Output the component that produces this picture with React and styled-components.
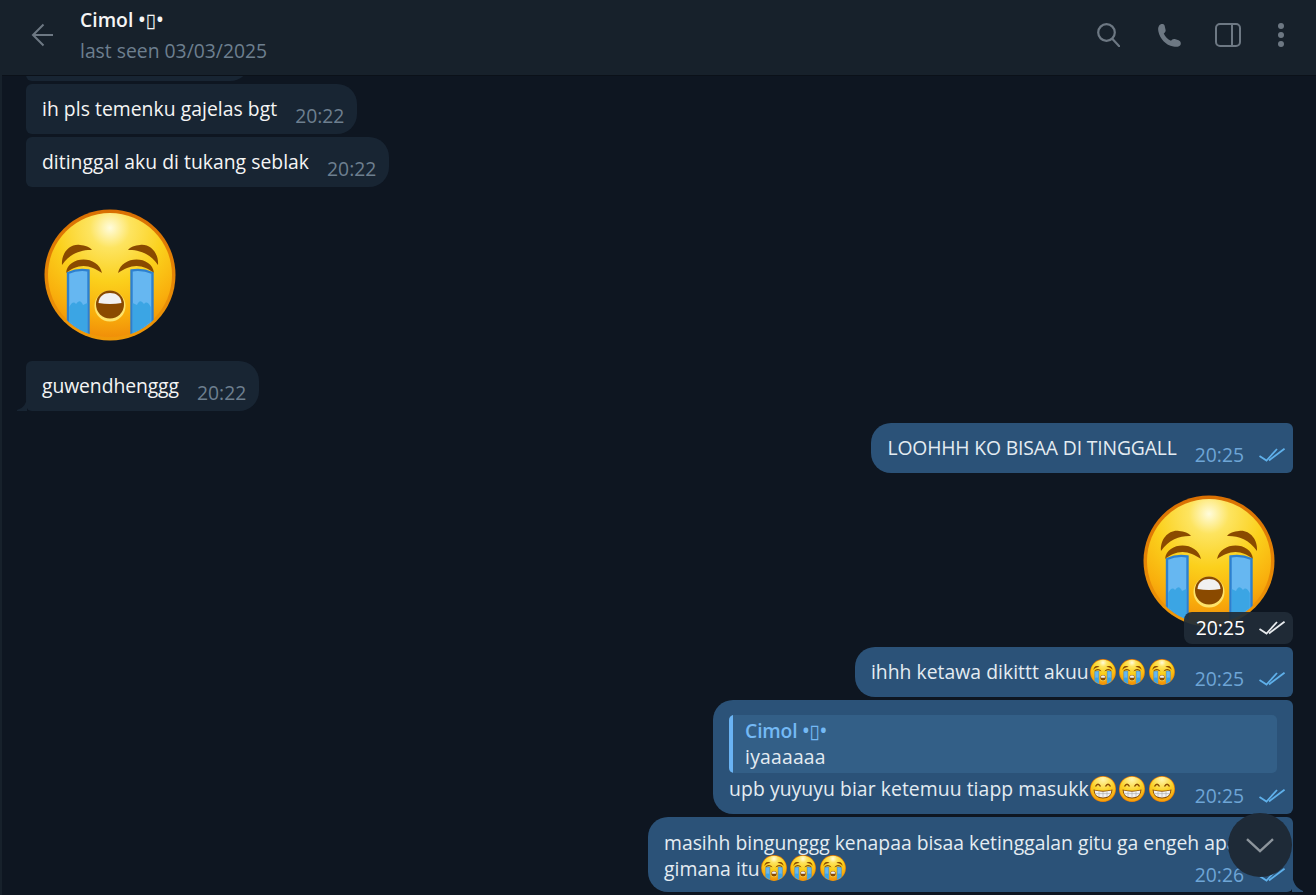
import React from "react";
import styled, { createGlobalStyle } from "styled-components";

const Global = createGlobalStyle`
  html, body { margin: 0; padding: 0; height: 100%; background: #0e1621; overflow: hidden; }
  #root { height: 100%; }
`;

const Page = styled.div`
  position: relative;
  width: 1316px;
  height: 895px;
  overflow: hidden;
  display: flex;
  flex-direction: column;
  background: #0e1621;
  border-left: 2px solid #17212b;
  box-sizing: border-box;
  font-family: "Open Sans", "DejaVu Sans", sans-serif;
  font-size: 19.33px;
  color: #f5f5f5;
  &::after {
    content: "";
    position: absolute;
    left: -2px;
    bottom: 0;
    width: 2px;
    height: 21px;
    background: #2b5278;
  }
`;

const Header = styled.header`
  position: relative;
  z-index: 2;
  flex: 0 0 76px;
  box-sizing: border-box;
  display: flex;
  align-items: center;
  background: #17212b;
  border-bottom: 1px solid #0b1119;
  padding: 0 32px 5px 29px;
`;

const HeaderTitle = styled.div`
  margin-left: 27px;
  flex: 1;
  display: flex;
  flex-direction: column;
  gap: 5px;
`;

const Name = styled.div`
  font-weight: 600;
  line-height: 26px;
  color: #f5f5f5;
`;

const LastSeen = styled.div`
  line-height: 26px;
  color: #6d7f8f;
`;

const HeaderIcons = styled.div`
  display: flex;
  align-items: center;
`;

const Icon = styled.svg`
  display: block;
  flex: none;
  margin-left: ${(p) => p.$ml || 0}px;
`;

const Messages = styled.main`
  flex: 1;
  min-height: 0;
  display: flex;
  flex-direction: column;
  justify-content: flex-end;
  gap: 3px;
  padding: 0 23px 3px 24px;
`;

const Bubble = styled.div`
  position: relative;
  flex: none;
  align-self: ${(p) => (p.$out ? "flex-end" : "flex-start")};
  display: flex;
  flex-direction: ${(p) => (p.$col ? "column" : "row")};
  box-sizing: border-box;
  width: ${(p) => (p.$w ? p.$w + "px" : "auto")};
  padding: 12px ${(p) => (p.$out ? 8 : 13)}px ${(p) => p.$pb || 12}px 16px;
  background: ${(p) => (p.$out ? "#2b5278" : "#182533")};
  border-radius: ${(p) => (p.$out ? "20px 6px 6px 20px" : "6px 20px 20px 6px")};
  margin-top: ${(p) => p.$mt || 0}px;
  color: ${(p) => (p.$out ? "#e4ecf2" : "#f5f5f5")};
`;

const ClippedBubble = styled.div`
  flex: none;
  width: 224px;
  height: 50px;
  background: #182533;
  border-radius: 6px 20px 20px 6px;
`;

const Tail = styled.svg`
  position: absolute;
  bottom: 0;
  ${(p) => (p.$out ? "right: -10px;" : "left: -9px;")}
`;

const Text = styled.div`
  line-height: 26px;
  white-space: pre;
  display: flex;
  align-items: center;
  letter-spacing: ${(p) => p.$ls || 0}px;
`;

const Lines = styled.div`
  flex: 1;
  min-width: 0;
`;

const Line = styled.div`
  display: flex;
  align-items: center;
  height: 26px;
  white-space: pre;
  letter-spacing: ${(p) => p.$ls || 0}px;
`;

const Meta = styled.div`
  flex: none;
  align-self: flex-end;
  display: flex;
  align-items: center;
  gap: 15px;
  margin-left: ${(p) => (p.$auto ? "auto" : "18px")};
  margin-bottom: -6px;
  line-height: 24px;
  letter-spacing: 0;
  color: ${(p) => (p.$out ? "#6ea5d6" : "#6d7f8f")};
`;

const ColumnFoot = styled.div`
  display: flex;
  justify-content: space-between;
`;

const Reply = styled.div`
  position: relative;
  box-sizing: border-box;
  height: 58px;
  margin: 3px 8px 3px 0;
  padding: 3px 0 0 16px;
  background: #335f87;
  border-radius: 5px;
  overflow: hidden;
  &::before {
    content: "";
    position: absolute;
    left: 0;
    top: 0;
    bottom: 0;
    width: 4px;
    background: #6ab3f3;
  }
`;

const ReplyName = styled.div`
  font-weight: 600;
  line-height: 26px;
  letter-spacing: -0.2px;
  color: #74b9f5;
`;

const ReplyText = styled.div`
  line-height: 26px;
  letter-spacing: 0.2px;
  color: #e4ecf2;
`;

const StickerRow = styled.div`
  flex: none;
  position: relative;
  align-self: ${(p) => (p.$out ? "flex-end" : "flex-start")};
  margin: ${(p) => (p.$out ? "19px 18px 18px 0" : "19px 0 18px 18px")};
  height: 131px;
  display: flex;
`;

const TimeBadge = styled.div`
  position: absolute;
  right: -18px;
  bottom: -18px;
  display: flex;
  align-items: center;
  gap: 14px;
  height: 32px;
  padding: 0 8px 0 12px;
  border-radius: 8px;
  background: rgba(32, 44, 56, 0.93);
  color: #fff;
  line-height: 32px;
`;

const ScrollButton = styled.button`
  position: absolute;
  z-index: 3;
  right: 24px;
  bottom: 18px;
  width: 64px;
  height: 64px;
  padding: 0;
  border: 0;
  border-radius: 50%;
  background: #1e2a37;
  display: flex;
  align-items: center;
  justify-content: center;
`;

const InlineEmoji = styled.span`
  display: inline-flex;
  margin: 0 3.5px 0 ${(p) => (p.$first ? 1 : 0)}px;
  &:last-of-type {
    margin-right: 2px;
  }
`;

const Checks = ({ color }) => (
  <svg width="26" height="14" viewBox="0 0 26 14" fill="none" stroke={color} strokeWidth="1.8">
    <path d="M0.5 8 L7.5 12.5 L18 1" />
    <path d="M10 12.5 L25.5 0.7" />
  </svg>
);

let uid = 0;
const Cry = ({ size }) => {
  const id = "c" + uid++;
  return (
    <svg width={size} height={size} viewBox="0 0 132 132">
      <defs>
        <radialGradient id={id + "f"} cx="50%" cy="12%" r="90%">
          <stop offset="0" stopColor="#fffcdc" />
          <stop offset="0.18" stopColor="#fde460" />
          <stop offset="0.48" stopColor="#fbd01c" />
          <stop offset="0.78" stopColor="#f9ae0c" />
          <stop offset="1" stopColor="#f08c08" />
        </radialGradient>
        <linearGradient id={id + "r"} x1="0" y1="0" x2="0" y2="1">
          <stop offset="0" stopColor="#d96f02" />
          <stop offset="1" stopColor="#f09a08" />
        </linearGradient>
        <clipPath id={id + "c"}>
          <circle cx="66" cy="66" r="62.5" />
        </clipPath>
      </defs>
      <circle cx="66" cy="66" r="65.5" fill={`url(#${id}r)`} />
      <circle cx="66" cy="66" r="62" fill={`url(#${id}f)`} />
      <g fill="#8a4a00">
        <path d="M18 56 C17 44 26 34.5 36 36 C41 36.5 46 38 48 41 C38 40.5 26 44 18 56Z" />
        <path d="M114 56 C115 44 106 34.5 96 36 C91 36.5 86 38 84 41 C94 40.5 106 44 114 56Z" />
        <path d="M22 64 C23 55 31 50.5 39.5 50.5 C48 50.5 56 55 58 64 C52 60 46 57 39.5 57 C33 57 27 60 22 64Z" />
        <path d="M110 64 C109 55 101 50.5 92.5 50.5 C84 50.5 76 55 74 64 C80 60 86 57 92.5 57 C99 57 105 60 110 64Z" />
      </g>
      <g clipPath={`url(#${id}c)`}>
        <path d="M24 64 Q34 59.5 44.5 61.5 L44.5 128 L24 114Z" fill="#66b7f1" stroke="#2d80cf" strokeWidth="2.4" />
        <path d="M25.2 98 Q29 91 32 95 Q36 89 39 96 L43.3 94 V126 L25.2 113Z" fill="#3ba5e4" />
        <path d="M87.5 61.5 Q98 59.5 108.5 64 L108.5 114 L87.5 128Z" fill="#66b7f1" stroke="#2d80cf" strokeWidth="2.4" />
        <path d="M106.8 98 Q103 91 100 95 Q96 89 93 96 L88.7 94 V126 L106.8 113Z" fill="#3ba5e4" />
      </g>
      <circle cx="66" cy="97" r="15.5" fill="#fde36a" />
      <circle cx="66" cy="95.5" r="14" fill="#8a4a00" />
      <path d="M54.5 94 C55 87 60 84 66 84 C72 84 77 87 77.5 94 Q66 96 54.5 94Z" fill="#f1f1f1" />
    </svg>
  );
};

const Grin = ({ size }) => {
  const id = "g" + uid++;
  return (
    <svg width={size} height={size} viewBox="0 0 26 26">
      <defs>
        <radialGradient id={id} cx="50%" cy="10%" r="95%">
          <stop offset="0" stopColor="#fff6b0" />
          <stop offset="0.5" stopColor="#fbd227" />
          <stop offset="1" stopColor="#f49a08" />
        </radialGradient>
      </defs>
      <circle cx="13" cy="13" r="13" fill="#e87c04" />
      <circle cx="13" cy="13" r="12.3" fill={`url(#${id})`} />
      <path d="M5.5 10.5 Q8 6 10.5 10.5 M15.5 10.5 Q18 6 20.5 10.5" stroke="#8a4a00" strokeWidth="1.5" fill="none" />
      <path d="M3.5 13.5 Q13 16 22.5 13.5 Q22 22.5 13 22.5 Q4 22.5 3.5 13.5Z" fill="#8a4a00" />
      <path d="M4.6 14.6 Q13 16.8 21.4 14.6 Q21 21.6 13 21.6 Q5 21.6 4.6 14.6Z" fill="#f2f2f2" />
      <path d="M4.8 17.6 H21.2 M9 15.5 V21 M13 16 V21.6 M17 15.5 V21" stroke="#a9a9a9" strokeWidth="0.6" fill="none" />
    </svg>
  );
};

const Emojis = ({ kind }) => {
  const E = kind === "grin" ? Grin : Cry;
  return (
    <>
      <InlineEmoji $first><E size={26} /></InlineEmoji>
      <InlineEmoji><E size={26} /></InlineEmoji>
      <InlineEmoji><E size={26} /></InlineEmoji>
    </>
  );
};

const OutTail = () => (
  <Tail $out width="11" height="18" viewBox="0 0 11 18">
    <path d="M0 0 C1 9 4 14 11 17 L11 18 L0 18Z" fill="#2b5278" />
  </Tail>
);

const InTail = () => (
  <Tail width="10" height="16" viewBox="0 0 10 16">
    <path d="M10 0 C10 8 7 13 0 15 L0 16 L10 16Z" fill="#182533" />
  </Tail>
);

const IconGrey = "#6d7883";

export default function App() {
  return (
    <>
      <Global />
      <Page>
        <Header>
          <Icon width="22" height="24" viewBox="0 0 22 24" fill="none" stroke={IconGrey} strokeWidth="2">
            <path d="M22 12 H2 M12.5 1.5 L2 12 L12.5 22.5" />
          </Icon>
          <HeaderTitle>
            <Name>Cimol •▯•</Name>
            <LastSeen>last seen 03/03/2025</LastSeen>
          </HeaderTitle>
          <HeaderIcons>
            <Icon width="23" height="24" viewBox="0 0 23 24" fill="none" stroke={IconGrey} strokeWidth="2.2">
              <circle cx="9.5" cy="9.5" r="8.3" />
              <path d="M15.5 16 L22.5 23.5" strokeLinecap="round" />
            </Icon>
            <Icon $ml={37} width="25" height="24" viewBox="0 0 26 25" fill={IconGrey}>
              <path d="M2 3 C3.5 .5 7.5 .5 8 3 L9 7.5 C9.2 9 8 10 7 11 C8.5 14.5 11 17 14.5 18.5 C15.5 17.3 16.8 16.2 18.5 16.7 L22.5 18 C25 19 25.5 22 24 23.5 C22.5 25 20 25 17 24.5 C9 23 3 16 1.5 9 C1 6.5 1 4.5 2 3Z" />
            </Icon>
            <Icon $ml={33} width="26" height="24" viewBox="0 0 26 24" fill="none" stroke={IconGrey} strokeWidth="2">
              <rect x="1" y="1" width="24" height="22" rx="4" />
              <path d="M17 1 V23" />
            </Icon>
            <Icon $ml={37} width="6" height="24" viewBox="0 0 6 24" fill={IconGrey}>
              <circle cx="3" cy="3" r="3" />
              <circle cx="3" cy="12" r="3" />
              <circle cx="3" cy="21" r="3" />
            </Icon>
          </HeaderIcons>
        </Header>

        <Messages>
          <ClippedBubble />
          <Bubble>
            <Text $ls={0.04}>ih pls temenku gajelas bgt</Text>
            <Meta>20:22</Meta>
          </Bubble>
          <Bubble>
            <Text $ls={0.03}>ditinggal aku di tukang seblak</Text>
            <Meta>20:22</Meta>
          </Bubble>
          <StickerRow>
            <Cry size={132} />
          </StickerRow>
          <Bubble>
            <InTail />
            <Text $ls={-0.08}>guwendhenggg</Text>
            <Meta>20:22</Meta>
          </Bubble>
          <Bubble $out $mt={9}>
            <Text $ls={-0.15}>LOOHHH KO BISAA DI TINGGALL</Text>
            <Meta $out><span>20:25</span><Checks color="#5fb0ea" /></Meta>
          </Bubble>
          <StickerRow $out>
            <Cry size={132} />
            <TimeBadge>
              <span>20:25</span>
              <Checks color="#e8ebee" />
            </TimeBadge>
          </StickerRow>
          <Bubble $out>
            <Text $ls={0.04}>ihhh ketawa dikittt akuu<Emojis /></Text>
            <Meta $out><span>20:25</span><Checks color="#5fb0ea" /></Meta>
          </Bubble>
          <Bubble $out $col>
            <Reply>
              <ReplyName>Cimol •▯•</ReplyName>
              <ReplyText>iyaaaaaa</ReplyText>
            </Reply>
            <ColumnFoot>
              <Text $ls={0.07}>upb yuyuyu biar ketemuu tiapp masukk<Emojis kind="grin" /></Text>
              <Meta $out><span>20:25</span><Checks color="#5fb0ea" /></Meta>
            </ColumnFoot>
          </Bubble>
          <Bubble $out $w={645} $pb={11}>
            <OutTail />
            <Lines>
              <Line>masihh bingunggg kenapaa bisaa ketinggalan gitu ga engeh apa</Line>
              <Line $ls={0.05}>gimana itu<Emojis /></Line>
            </Lines>
            <Meta $out $auto><span>20:26</span><Checks color="#5fb0ea" /></Meta>
          </Bubble>
        </Messages>

        <ScrollButton aria-label="scroll down">
          <svg width="28" height="15" viewBox="0 0 28 15" fill="none" stroke="#8d959c" strokeWidth="2.4">
            <path d="M1 1.2 L14 13.2 L27 1.2" />
          </svg>
        </ScrollButton>
      </Page>
    </>
  );
}
